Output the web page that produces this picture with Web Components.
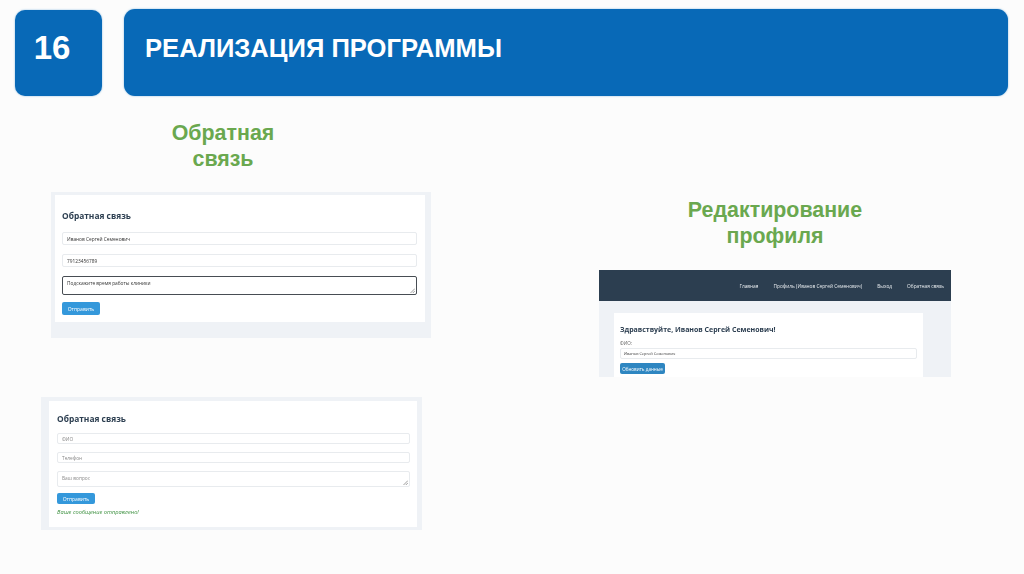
<!doctype html>
<html lang="ru">
<head>
<meta charset="utf-8">
<title>Реализация программы</title>
<style>
	html, body { margin: 0; height: 100%; }
	body {
		width: 1024px;
		height: 574px;
		overflow: hidden;
		background: #fcfcfc;
		font-family: 'Liberation Sans', Arial, sans-serif;
	}
	.columns { display: grid; grid-template-columns: 599px 1fr; }
	.left { padding-top: 24px; }
	.right { padding-top: 101px; }
</style>
</head>
<body>
<slide-header num="16">РЕАЛИЗАЦИЯ ПРОГРАММЫ</slide-header>
<div class="columns">
	<div class="left">
		<shot-caption style="margin-left: 121px">Обратная<br>связь</shot-caption>
		<feedback-shot style="margin: 20px 0 0 51px">
			<shot-field>Иванов Сергей Семенович</shot-field>
			<shot-field>79123456789</shot-field>
			<shot-field area focus>Подскажите время работы клиники</shot-field>
		</feedback-shot>
		<feedback-shot sent style="margin: 59px 0 0 41px">
			<shot-field hint>ФИО</shot-field>
			<shot-field hint>Телефон</shot-field>
			<shot-field hint area>Ваш вопрос</shot-field>
		</feedback-shot>
	</div>
	<div class="right">
		<shot-caption style="width: 352px">Редактирование<br>профиля</shot-caption>
		<profile-shot style="margin-top: 21px" name="Иванов Сергей Семенович"></profile-shot>
	</div>
</div>

<script>
	customElements.define(
		'slide-header',
		class extends HTMLElement {
			constructor() {
				super()
				this.attachShadow({ mode: 'open' }).innerHTML = /* html */ `
					<style>
						:host {
							display: flex;
							gap: 22px;
							padding: 9px 16px 0 15px;
							color: #fff;
							font: bold 25.6px 'Liberation Sans', Arial, sans-serif;
						}
						.num, .title {
							display: flex;
							align-items: center;
							background: #0869b7;
							box-shadow: 0 0 2px #7fb4dc;
						}
						.num {
							box-sizing: border-box;
							flex: none;
							width: 87px;
							height: 86px;
							margin-top: 1px;
							justify-content: center;
							padding: 0 13px 10px 0;
							border-radius: 10px;
							font-size: 33px;
						}
						.title {
							flex: 1;
							height: 87px;
							padding: 0 0 9px 21px;
							box-sizing: border-box;
							border-radius: 11px;
						}
					</style>
					<div class="num">${this.getAttribute('num')}</div>
					<div class="title"><slot></slot></div>
				`
			}
		}
	)

	customElements.define(
		'shot-caption',
		class extends HTMLElement {
			constructor() {
				super()
				this.attachShadow({ mode: 'open' }).innerHTML = /* html */ `
					<style>
						:host {
							display: block;
							width: 204px;
							color: #6aa84f;
							font: bold 21.4px/26px 'Liberation Sans', Arial, sans-serif;
							text-align: center;
						}
					</style>
					<slot></slot>
				`
			}
		}
	)

	customElements.define(
		'shot-field',
		class extends HTMLElement {
			constructor() {
				super()
				this.attachShadow({ mode: 'open' }).innerHTML = /* html */ `
					<style>
						:host {
							position: relative;
							display: flex;
							align-items: center;
							box-sizing: border-box;
							height: var(--field-h, 13px);
							padding: 0 4px;
							background: #fff;
							border: 1px solid #e8ebee;
							border-radius: 2px;
							color: #333;
							font-size: 4.8px;
						}
						:host([hint]) { color: #8a8a8a; }
						:host([area]) {
							align-items: flex-start;
							height: var(--area-h, 19px);
							padding-top: 3px;
						}
						:host([focus]) {
							border: 1.5px solid #474d53;
							border-radius: 2px;
						}
						svg { position: absolute; right: 1px; bottom: 1px; display: none; }
						:host([area]) svg { display: block; }
					</style>
					<slot></slot>
					<svg width="5" height="5" viewBox="0 0 5 5" fill="none" stroke="#777" stroke-width=".7">
						<path d="M0.5 5 5 0.5M2.8 5 5 2.8" />
					</svg>
				`
			}
		}
	)

	customElements.define(
		'feedback-shot',
		class extends HTMLElement {
			constructor() {
				super()
				this.attachShadow({ mode: 'open' }).innerHTML = /* html */ `
					<style>
						:host {
							display: block;
							box-sizing: border-box;
							width: 380px;
							padding: 3px 6px 16px 4px;
							background: #eff2f6;
							filter: blur(0.55px);
							font-family: 'Open Sans', 'DejaVu Sans', sans-serif;
						}
						.card {
							display: flex;
							flex-direction: column;
							gap: 9px;
							padding: 14px 8px 7px 7px;
							background: #fff;
						}
						h2 {
							margin: 0;
							color: #2c3e50;
							font-size: 8.4px;
							line-height: 14px;
						}
						.fields { display: flex; flex-direction: column; gap: var(--gap, 9px); }
						button {
							align-self: flex-start;
							width: 38px;
							height: var(--btn-h, 13px);
							margin-top: -2px;
							padding: 0;
							background: #3498db;
							border: 0;
							border-radius: 2px;
							color: #fff;
							font: 5px 'Open Sans', 'DejaVu Sans', sans-serif;
						}
						.ok { display: none; color: #3d9140; font-size: 5.7px; font-style: italic; line-height: 10px; }
						:host([sent]) {
							width: 381px;
							padding: 4px 5px 3px 8px;
							--field-h: 11px;
							--area-h: 16px;
							--btn-h: 11px;
							--gap: 8px;
						}
						:host([sent]) .card { gap: 7px; padding: 11px 7px 10px 8px; }
						:host([sent]) .fields { margin-bottom: 1px; }
						:host([sent]) .ok { display: block; margin-top: -4px; }
					</style>
					<div class="card">
						<h2>Обратная связь</h2>
						<div class="fields"><slot></slot></div>
						<button>Отправить</button>
						<div class="ok">Ваше сообщение отправлено!</div>
					</div>
				`
			}
		}
	)

	customElements.define(
		'profile-shot',
		class extends HTMLElement {
			constructor() {
				super()
				const name = this.getAttribute('name')
				this.attachShadow({ mode: 'open' }).innerHTML = /* html */ `
					<style>
						:host {
							display: block;
							width: 352px;
							height: 107px;
							overflow: hidden;
							background: #eff2f6;
							filter: blur(0.55px);
							font-family: 'Open Sans', 'DejaVu Sans', sans-serif;
						}
						nav {
							display: flex;
							justify-content: flex-end;
							align-items: center;
							gap: 15px;
							height: 31px;
							padding-right: 7px;
							background: #2c3e50;
							color: #e8ecef;
							font-size: 4.8px;
						}
						.card {
							display: flex;
							flex-direction: column;
							align-items: stretch;
							height: 64px;
							box-sizing: border-box;
							margin: 12px 28px 0 15px;
							padding: 11px 6px 0;
							background: #fff;
						}
						h2 { margin: 0; color: #2c3e50; font-size: 7px; line-height: 12px; }
						label { margin-top: 4px; color: #666; font-size: 4.6px; line-height: 7px; }
						.input {
							display: flex;
							align-items: center;
							box-sizing: border-box;
							height: 11px;
							margin-top: 1px;
							padding: 0 3px;
							border: 1px solid #e8ebee;
							border-radius: 2px;
							color: #333;
							font-size: 3.9px;
						}
						button {
							align-self: flex-start;
							width: 45px;
							height: 11px;
							margin-top: 4px;
							padding: 0;
							background: #2e86c1;
							border: 0;
							border-radius: 2px;
							color: #fff;
							font: 4.6px 'Open Sans', 'DejaVu Sans', sans-serif;
						}
					</style>
					<nav>
						<span>Главная</span>
						<span>Профиль (${name})</span>
						<span>Выход</span>
						<span>Обратная связь</span>
					</nav>
					<div class="card">
						<h2>Здравствуйте, ${name}!</h2>
						<label>ФИО:</label>
						<div class="input">${name}</div>
						<button>Обновить данные</button>
					</div>
				`
			}
		}
	)
</script>
</body>
</html>
